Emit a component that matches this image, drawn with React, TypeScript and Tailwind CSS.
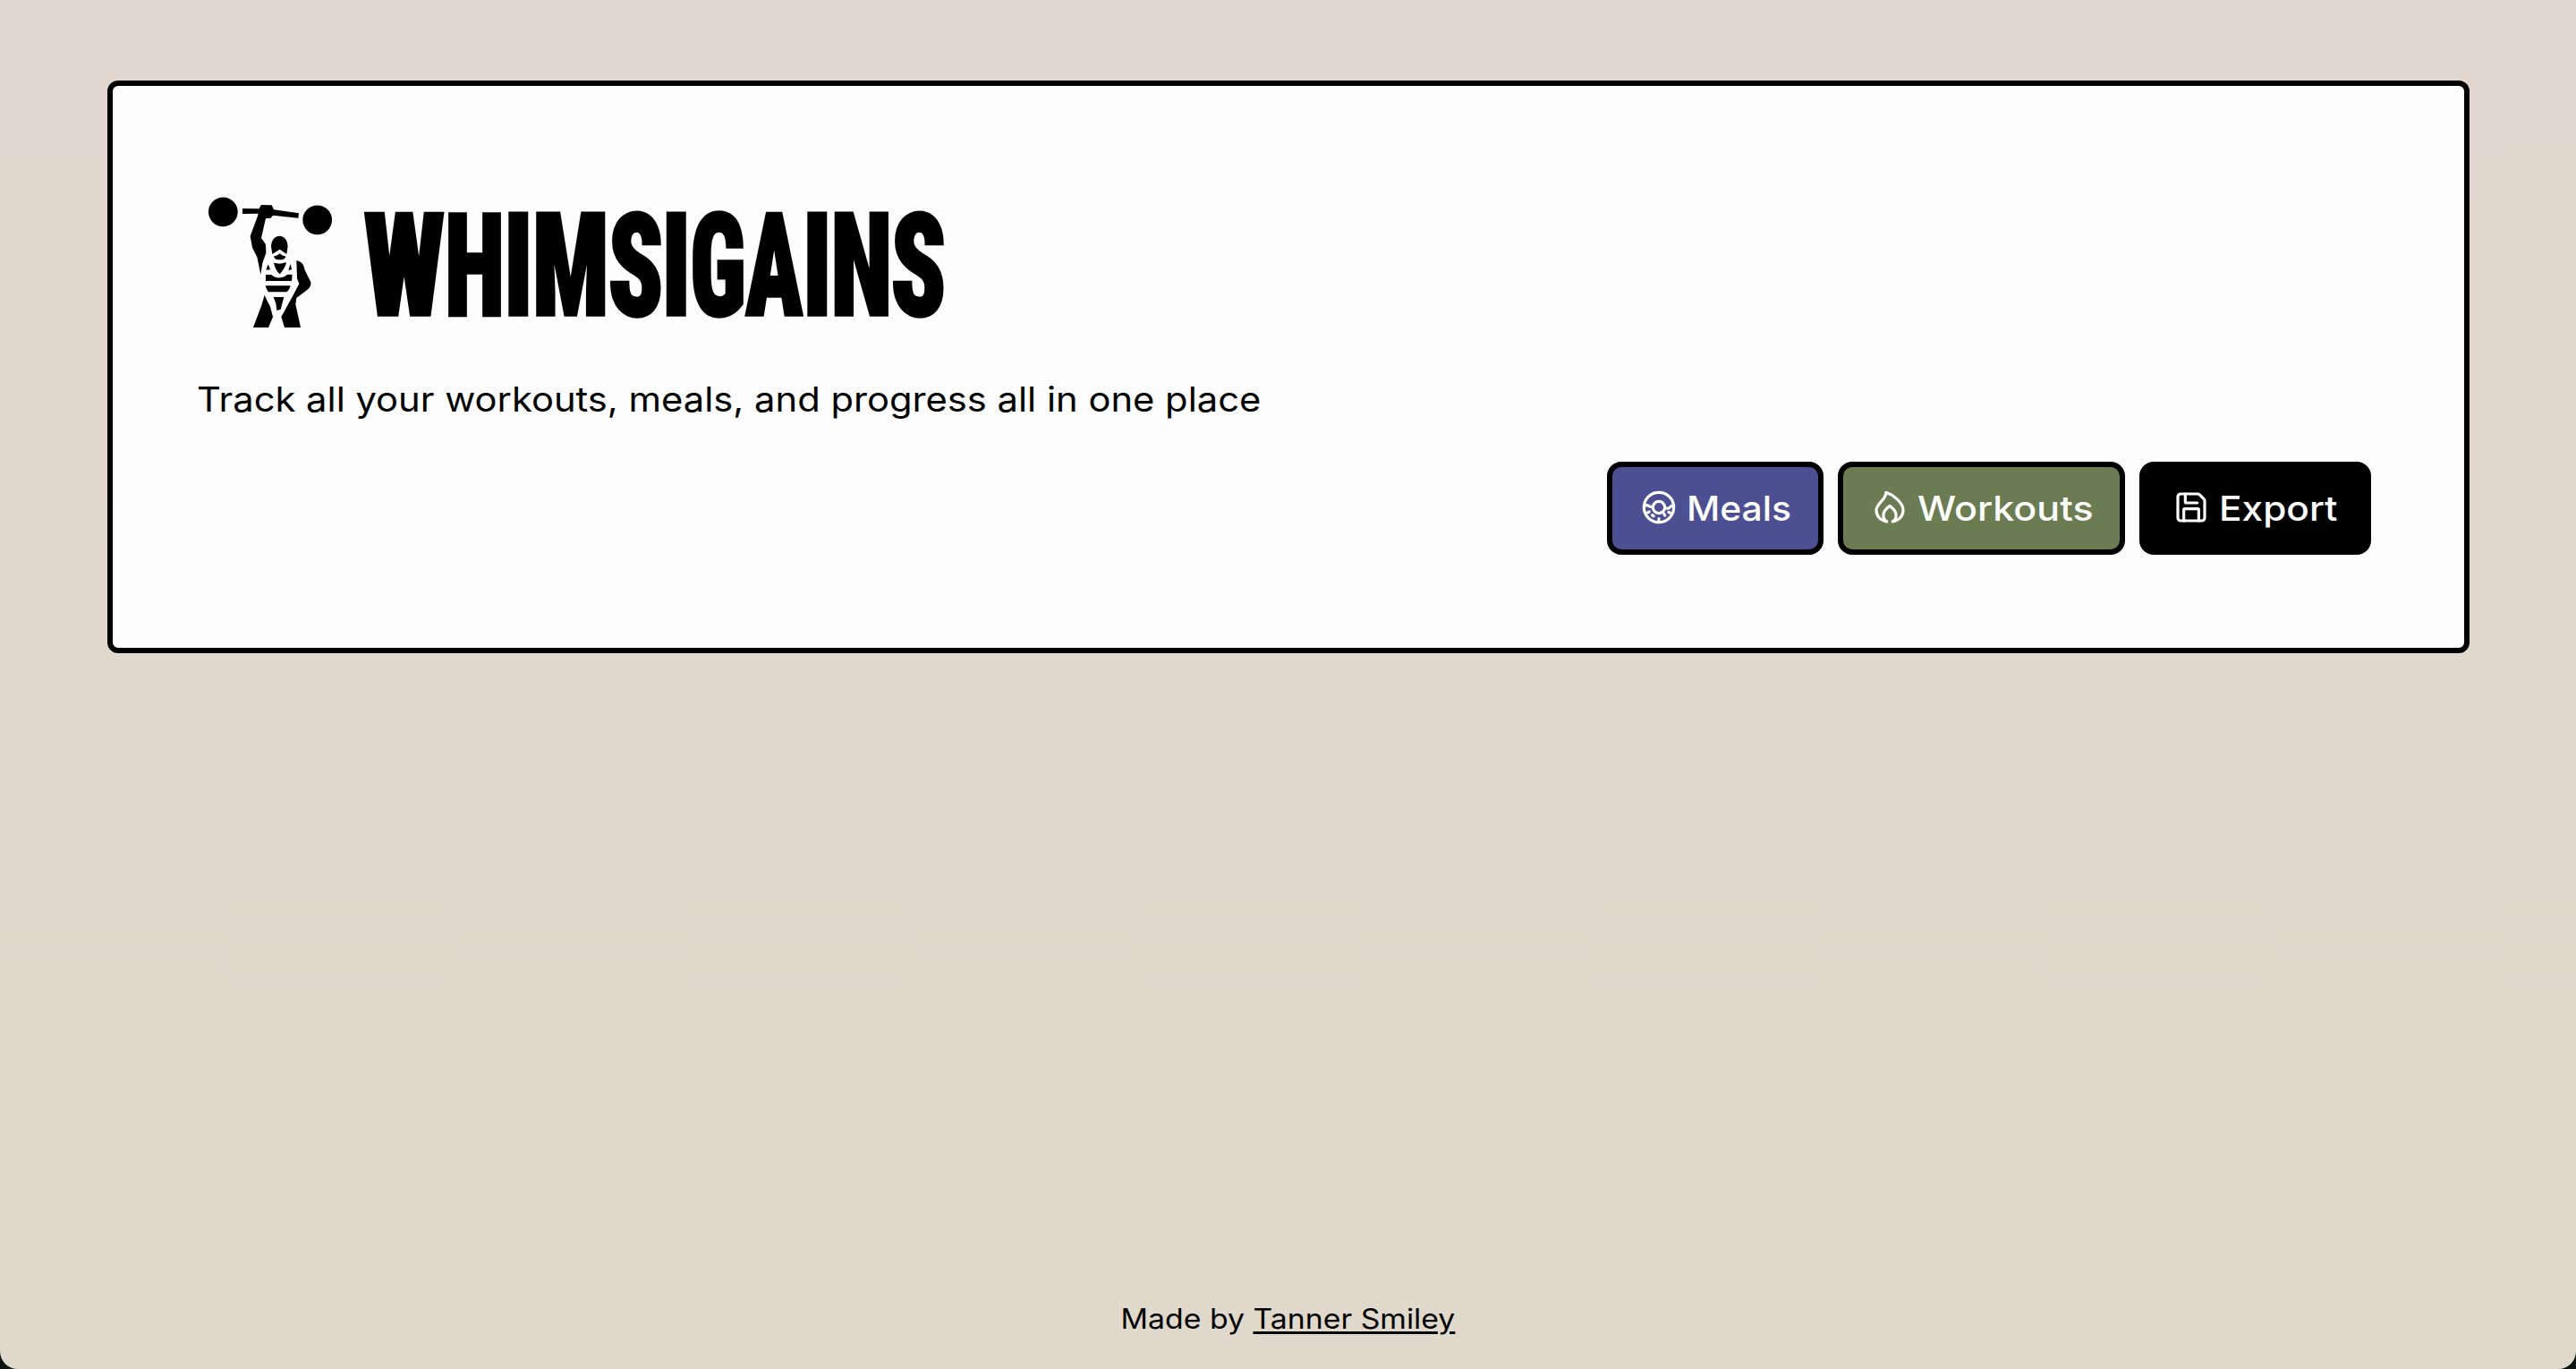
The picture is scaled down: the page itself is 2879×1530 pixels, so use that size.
import React from "react";

function Lifter() {
  return (
    <svg className="block h-[165px] w-[160px] shrink-0" viewBox="0 0 480 495" fill="black" aria-hidden="true">
      <circle cx="88" cy="80.500" r="49" />
      <circle cx="404" cy="107.500" r="49" />
      <path d="M153 69L208 70L216 57L251 58L258 73L342 85L340 101L255 92L248 101L231 102L216 168L231 190L232 218L220 252L214 290L202 232L186 200L179 162L203 97L206 86L153 87Z" />
      <path d="M277 161C294 161 304 176 305 196L301 222L278 206L253 222L249 196C250 176 261 161 277 161Z" />
      <path d="M257 230L270 226L278 220L286 226L299 230C293 240 286 241 278 241C270 241 263 240 257 230Z" />
      <path d="M258 251L278 254L300 250C297 266 286 281 278 289C267 279 261 266 258 251Z" />
      <path d="M239 256L246 274L232 275Z M314 254L318 274L307 276Z" />
      <path d="M231 291L249 291C260 300 270 302 280 301C293 299 299 293 304 290L320 291L318 312L231 312Z" />
      <path d="M230 328L314 328C311 338 306 347 301 349L240 349C236 343 232 337 230 328Z" />
      <path d="M257 366L292 366L281 407L268 411L265 387Z" />
      <path d="M334 243C347 246 359 254 361 273L382 316C384 327 378 336 369 343L334 369L331 390L348 468L294 468L283 432C299 405 316 373 343 322L336 304Z" />
      <path d="M227 359C233 373 240 385 246 398L255 433L240 468L189 468L217 394Z" />
    </svg>
  );
}

// Each letter of the wordmark: [glyph, x offset, horizontal scale]
const letters: [string, number, number][] = [
  ["W", 26.6, 0.767],
  ["H", 117, 0.691],
  ["I", 182.9, 0.733],
  ["M", 214.9, 0.71],
  ["S", 299.6, 0.708],
  ["I", 359.4, 0.733],
  ["G", 391, 0.671],
  ["A", 453.3, 0.664],
  ["I", 516.9, 0.733],
  ["N", 548.4, 0.71],
  ["S", 615.6, 0.708],
];

function Wordmark() {
  return (
    <svg className="-mt-[30px] block h-[225px] w-[700px] shrink-0 overflow-visible" viewBox="0 -30 700 225" role="img" aria-label="WHIMSIGAINS">
      <g className="font-['Roboto',sans-serif] text-[159px] font-black [font-stretch:75%]" fill="black" stroke="black" strokeWidth="3.5">
        {letters.map(([glyph, x, scale], i) => (
          <text key={i} transform={`translate(${x} 142.3) scale(${scale} 1)`}>{glyph}</text>
        ))}
      </g>
    </svg>
  );
}

const iconClass = "relative -top-px block size-[40px] shrink-0";

const line = {
  viewBox: "0 0 24 24",
  fill: "none",
  stroke: "currentColor",
  strokeWidth: 1.9,
  strokeLinecap: "round",
  strokeLinejoin: "round",
} as const;

function Donut() {
  return (
    <svg className={iconClass} {...line}>
      <circle cx="12" cy="12" r="10" />
      <circle cx="12" cy="12" r="4" />
      <path d="M2 11.500C3 10.500 4.500 10.500 5.500 11.200C6.300 11.700 7 11.800 8 11.500M16 12C17 13 18.500 13 19.300 12C20 11.200 21 10.500 22 10.800M4.500 15.500L5.500 15M7.500 17.200L8.500 17.900M12 19.500V20.300M15.500 16.500L16 17.500M18.500 15.200L19.500 15.700" />
    </svg>
  );
}

function Flame() {
  return (
    <svg className={iconClass} {...line}>
      <path d="M10 21.500C6 21 3 18 3 14C3 9 9.500 7.500 9.500 2C14 3.500 21 8.500 21 14C21 18 18 21 14 21.500" />
      <path d="M10 21.500C6.500 19 7 14.500 12 11C17 14.500 17.500 19 14 21.500" />
    </svg>
  );
}

function Floppy() {
  return (
    <svg className={iconClass} {...line}>
      <path d="M3 19V5a2 2 0 0 1 2-2h11.170a2 2 0 0 1 1.420.590l2.820 2.820A2 2 0 0 1 21 7.830V19a2 2 0 0 1-2 2H5a2 2 0 0 1-2-2Z" />
      <path d="M8 3v5.400a.6.6 0 0 0 .6.600H16M17 21v-7.400a.6.6 0 0 0-.6-.6H7.600a.6.6 0 0 0-.6.600V21" />
    </svg>
  );
}

export default function App() {
  return (
    <div className="h-[1530px] w-full bg-[#0a1512] font-['Inter',sans-serif] text-black">
      <div className="flex h-full flex-col items-center rounded-b-[20px] bg-linear-to-b from-[#e3d8cf] to-[#e0d9cb] pt-[90px]">
        <main className="flex h-[640px] w-[2640px] flex-col rounded-[12px] border-[6px] border-black bg-[#fdfdfd] pr-[104px] pl-[94px]">
          <h1 className="mt-[114px] flex h-[165px] items-start">
            <Lifter />
            <Wordmark />
          </h1>
          <p className="mt-[47px] mb-px h-[48px] w-fit origin-left scale-x-[1.078] text-[38.700px] leading-[48px] whitespace-nowrap">
            Track all your workouts, meals, and progress all in one place
          </p>
          <div className="mt-[45px] flex justify-end gap-[16px] text-[38.700px] font-[450] text-white">
            <button className="flex h-[104px] w-[242px] items-center gap-[11px] rounded-[16px] border-[6px] border-black bg-[#4c4f92] pl-[32px] whitespace-nowrap">
              <Donut />
              <span className="origin-left scale-x-[1.055]">Meals</span>
            </button>
            <button className="flex h-[104px] w-[321px] items-center gap-[11px] rounded-[16px] border-[6px] border-black bg-[#6b7c52] pl-[32px] whitespace-nowrap">
              <Flame />
              <span className="origin-left scale-x-[1.112]">Workouts</span>
            </button>
            <button className="flex h-[104px] w-[259px] items-center gap-[11px] rounded-[16px] border-[6px] border-black bg-black pl-[32px] whitespace-nowrap">
              <Floppy />
              <span className="origin-left scale-x-[1.095]">Export</span>
            </button>
          </div>
        </main>
        <footer className="mt-auto mb-[36px] scale-x-[1.090] text-[31px] leading-[40px] whitespace-nowrap">
          Made by <a className="underline decoration-[3px] underline-offset-[3px]">Tanner Smiley</a>
        </footer>
      </div>
    </div>
  );
}
